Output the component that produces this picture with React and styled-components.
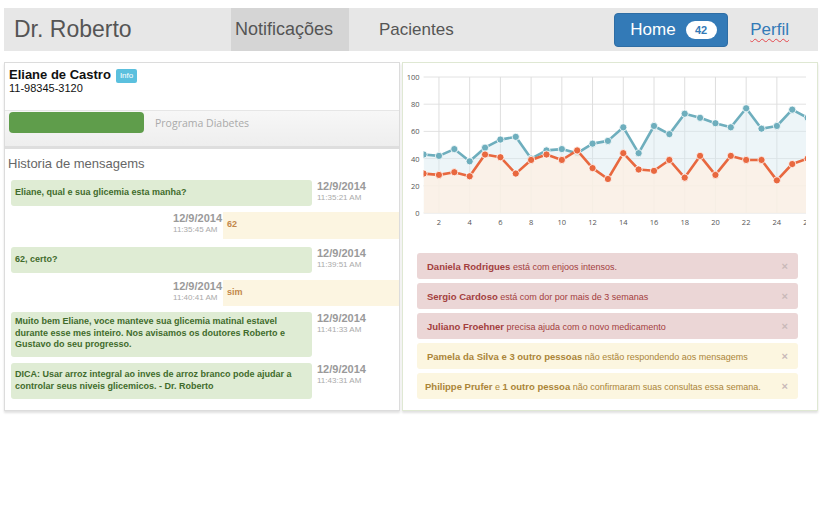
import React from 'react';
import styled, { createGlobalStyle } from 'styled-components';

const GlobalStyle = createGlobalStyle`
  body {
    margin: 0;
    background: #fff;
    font-family: "Liberation Sans", Arial, sans-serif;
  }
`;

const Page = styled.div`
  width: 822px;
  height: 516px;
  padding: 8px 4px 0;
  box-sizing: border-box;
`;

const Navbar = styled.div`
  height: 43px;
  background: #e7e7e7;
  display: flex;
  align-items: stretch;
  padding-left: 10px;
  padding-right: 29px;
`;

const Brand = styled.div`
  width: 217px;
  font-size: 23px;
  color: #555;
  display: flex;
  align-items: center;
`;

const NavItem = styled.div`
  width: ${p => p.w}px;
  padding-left: 4px;
  box-sizing: border-box;
  font-size: ${p => p.size || 17}px;
  color: #555;
  display: flex;
  align-items: center;
  background: ${p => p.active ? '#d5d5d5' : 'transparent'};
  margin-right: ${p => p.gap || 0}px;
`;

const HomeButton = styled.div`
  margin-left: auto;
  align-self: center;
  width: 114px;
  height: 34px;
  box-sizing: border-box;
  background: #337ab7;
  border: 1px solid #2e6da4;
  border-radius: 4px;
  color: #fff;
  font-size: 17px;
  display: flex;
  align-items: center;
  padding-left: 15px;
`;

const Badge = styled.span`
  margin-left: 10px;
  background: #fff;
  color: #337ab7;
  font-size: 11px;
  font-weight: bold;
  width: 31px;
  height: 18px;
  border-radius: 9px;
  display: flex;
  align-items: center;
  justify-content: center;
`;

const NavLink = styled.div`
  align-self: center;
  margin-left: 22px;
  font-size: 17px;
  color: #337ab7;
  text-decoration: underline wavy #e5484d;
  text-decoration-thickness: 1px;
  text-underline-offset: 3px;
`;

const Main = styled.div`
  display: flex;
  gap: 2px;
  margin-top: 11px;
  height: 349px;
`;

const Panel = styled.div`
  width: ${p => p.w}px;
  box-sizing: border-box;
  border: 1px solid ${p => p.border};
  box-shadow: 0 2px 2px rgba(0, 0, 0, 0.12);
  display: flex;
  flex-direction: column;
  overflow: hidden;
`;

const PatientHeader = styled.div`
  height: 48px;
  padding: 4px 4px 0;
  border-bottom: 1px solid #e6e6e6;
  box-sizing: border-box;
`;

const PatientName = styled.div`
  font-size: 13px;
  font-weight: bold;
  color: #111;
  display: flex;
  align-items: center;
  height: 14px;
`;

const InfoLabel = styled.span`
  margin-left: 5px;
  margin-top: 4px;
  background: #5bc0de;
  color: #fff;
  font-size: 8px;
  font-weight: normal;
  padding: 2px 4px 3px;
  border-radius: 2px;
`;

const Phone = styled.div`
  font-size: 11px;
  color: #111;
  margin-top: 1px;
`;

const ProgramRow = styled.div`
  height: 35px;
  background: linear-gradient(#f7f7f7, #eeeeee);
  display: flex;
  align-items: flex-start;
  padding: 0 4px;
  border-bottom: 3px solid #dedede;
`;

const ProgressFill = styled.div`
  width: 135px;
  height: 21px;
  margin-top: 1px;
  background: #5f9d4b;
  border-radius: 4px;
`;

const ProgramText = styled.div`
  margin-left: 11px;
  margin-top: 5px;
  font-family: "Open Sans", sans-serif;
  font-size: 10.5px;
  color: #aaa;
`;

const HistoryTitle = styled.div`
  font-size: 13px;
  color: #666;
  padding: 7px 0 0 3px;
  height: 27px;
  box-sizing: border-box;
`;

const MessageList = styled.div`
  display: flex;
  flex-direction: column;
  gap: 6px;
  padding-top: 4px;
`;

const MsgRow = styled.div`
  display: flex;
  justify-content: ${p => p.mine ? 'flex-start' : 'flex-end'};
  padding-left: ${p => p.mine ? 6 : 0}px;
  margin-bottom: ${p => p.extra || 0}px;
`;

const Bubble = styled.div`
  width: ${p => p.w}px;
  min-height: ${p => p.h}px;
  box-sizing: border-box;
  background: ${p => p.mine ? '#dfecd4' : '#fcf5e1'};
  color: ${p => p.mine ? '#3f6b2c' : '#c2874a'};
  border-radius: ${p => p.mine ? '3px' : '0'};
  font-size: 9px;
  font-weight: bold;
  line-height: 11.5px;
  padding: ${p => p.pad || '7px 4px 0'};
`;

const Stamp = styled.div`
  padding: 0 ${p => p.mine ? 0 : 1}px 0 ${p => p.mine ? 5 : 0}px;
  text-align: left;
`;

const StampDate = styled.div`
  font-size: 11px;
  font-weight: bold;
  color: #9a9a9a;
  line-height: 13px;
`;

const StampTime = styled.div`
  font-size: 8px;
  color: #aaa;
  line-height: 10px;
`;

const ChartBox = styled.div`
  height: 180px;
`;

const Alerts = styled.div`
  display: flex;
  flex-direction: column;
  gap: 4px;
  padding: 10px 19px 0 14px;
`;

const Alert = styled.div`
  height: 26px;
  border-radius: 3px;
  background: ${p => p.kind === 'danger' ? '#ebd6d6' : '#fcf6e0'};
  color: ${p => p.kind === 'danger' ? '#a3403e' : '#ab8538'};
  font-size: 9px;
  display: flex;
  align-items: center;
  padding: 0 10px 0 ${p => p.indent}px;
  b {
    font-size: 9.5px;
  }
`;

const Close = styled.span`
  margin-left: auto;
  color: #c9b9b9;
  font-size: 11px;
  font-weight: bold;
`;

const blue = [43, 42, 47, 38, 48, 54, 56, 40, 46, 47, 44, 51, 53, 63, 44, 64, 58, 73, 70, 66, 63, 77, 62, 64, 76, 70];
const orange = [29, 28, 30, 27, 43, 41, 29, 39, 43, 39, 46, 33, 25, 44, 32, 31, 39, 26, 42, 28, 42, 39, 39, 24, 36, 40];

const X0 = 20.6;
const DX = 15.36;
const Y0 = 150;
const DY = 1.36;
const RIGHT = 403;
const px = i => X0 + i * DX;
const py = v => Y0 - v * DY;

function Series({ data, color, fill }) {
  const pts = data.map((v, i) => `${px(i).toFixed(1)},${py(v).toFixed(1)}`);
  const area = `M${px(0)},${Y0} L${pts.join(' L')} L${px(data.length - 1)},${Y0} Z`;
  return (
    <g>
      <path d={area} fill={fill} />
      <polyline points={pts.join(' ')} fill="none" stroke={color} strokeWidth="2.6" strokeLinejoin="round" />
      {data.map((v, i) => (
        <circle key={i} cx={px(i)} cy={py(v)} r="3.6" fill={color} stroke="#fff" strokeWidth="0.8" />
      ))}
    </g>
  );
}

function Chart() {
  return (
    <svg width="414" height="180" style={{ display: 'block' }}>
      <defs>
        <clipPath id="plot">
          <rect x={X0} y="0" width={RIGHT - X0} height={Y0 + 1} />
        </clipPath>
        <clipPath id="axis">
          <rect x="0" y="0" width={RIGHT} height="180" />
        </clipPath>
      </defs>
      {[0, 20, 40, 60, 80, 100].map(v => (
        <g key={v}>
          <line x1={X0} x2={RIGHT} y1={py(v)} y2={py(v)} stroke="#e2e2e2" strokeWidth="1" />
          <text x={X0 - 4} y={py(v) + 3} fontSize="7.5" fill="#555" textAnchor="end" fontFamily="Open Sans, sans-serif">{v}</text>
        </g>
      ))}
      <g clipPath="url(#axis)">
        {[2, 4, 6, 8, 10, 12, 14, 16, 18, 20, 22, 24, 26].map(n => (
          <g key={n}>
            <line x1={px(n - 1)} x2={px(n - 1)} y1={py(100)} y2={Y0} stroke="#dedede" strokeWidth="1" />
            <text x={px(n - 1)} y={Y0 + 12} fontSize="7.5" fill="#555" textAnchor="middle" fontFamily="Open Sans, sans-serif">{n}</text>
          </g>
        ))}
      </g>
      <g clipPath="url(#plot)">
        <Series data={blue} color="#6eaebd" fill="rgba(214, 232, 240, 0.45)" />
        <Series data={orange} color="#e8683f" fill="rgba(252, 240, 228, 0.8)" />
      </g>
    </svg>
  );
}

const messages = [
  { mine: true, text: 'Eliane, qual e sua glicemia esta manha?', date: '12/9/2014', time: '11:35:21 AM', h: 26 },
  { mine: false, text: '62', date: '12/9/2014', time: '11:35:45 AM', h: 27, extra: 2 },
  { mine: true, text: '62, certo?', date: '12/9/2014', time: '11:39:51 AM', h: 26, extra: 1 },
  { mine: false, text: 'sim', date: '12/9/2014', time: '11:40:41 AM', h: 26 },
  { mine: true, text: 'Muito bem Eliane, voce manteve sua glicemia matinal estavel durante esse mes inteiro. Nos avisamos os doutores Roberto e Gustavo do seu progresso.', date: '12/9/2014', time: '11:41:33 AM', h: 45, pad: '4px 4px 0' },
  { mine: true, text: 'DICA: Usar arroz integral ao inves de arroz branco pode ajudar a controlar seus niveis glicemicos. - Dr. Roberto', date: '12/9/2014', time: '11:43:31 AM', h: 36, pad: '6px 4px 0' },
];

const alerts = [
  { kind: 'danger', name: 'Daniela Rodrigues', rest: ' está com enjoos intensos.', indent: 10 },
  { kind: 'danger', name: 'Sergio Cardoso', rest: ' está com dor por mais de 3 semanas', indent: 10 },
  { kind: 'danger', name: 'Juliano Froehner', rest: ' precisa ajuda com o novo medicamento', indent: 10 },
  { kind: 'warning', name: 'Pamela da Silva e 3 outro pessoas', rest: ' não estão respondendo aos mensagems', indent: 10 },
  { kind: 'warning', name: 'Philippe Prufer', rest: ' e ', name2: '1 outro pessoa', rest2: ' não confirmaram suas consultas essa semana.', indent: 8 },
];

export default function App() {
  return (
    <Page>
      <GlobalStyle />
      <Navbar>
        <Brand>Dr. Roberto</Brand>
        <NavItem active w={118} gap={26} size={18}>Notificações</NavItem>
        <NavItem w={90}>Pacientes</NavItem>
        <HomeButton>Home<Badge>42</Badge></HomeButton>
        <NavLink>Perfil</NavLink>
      </Navbar>
      <Main>
        <Panel w={396} border="#dcdcdc">
          <PatientHeader>
            <PatientName>Eliane de Castro<InfoLabel>Info</InfoLabel></PatientName>
            <Phone>11-98345-3120</Phone>
          </PatientHeader>
          <ProgramRow>
            <ProgressFill />
            <ProgramText>Programa Diabetes</ProgramText>
          </ProgramRow>
          <HistoryTitle>Historia de mensagems</HistoryTitle>
          <MessageList>
            {messages.map((m, i) => (
              <MsgRow key={i} mine={m.mine} extra={m.extra}>
                {!m.mine && (
                  <Stamp mine={false}>
                    <StampDate>{m.date}</StampDate>
                    <StampTime>{m.time}</StampTime>
                  </Stamp>
                )}
                <Bubble mine={m.mine} w={m.mine ? 301 : 176} h={m.h} pad={m.pad}>{m.text}</Bubble>
                {m.mine && (
                  <Stamp mine>
                    <StampDate>{m.date}</StampDate>
                    <StampTime>{m.time}</StampTime>
                  </Stamp>
                )}
              </MsgRow>
            ))}
          </MessageList>
        </Panel>
        <Panel w={416} border="#dfe8d3">
          <ChartBox>
            <Chart />
          </ChartBox>
          <Alerts>
            {alerts.map((a, i) => (
              <Alert key={i} kind={a.kind} indent={a.indent}>
                <span>
                  <b>{a.name}</b>{a.rest}
                  {a.name2 && <b>{a.name2}</b>}{a.rest2}
                </span>
                <Close>×</Close>
              </Alert>
            ))}
          </Alerts>
        </Panel>
      </Main>
    </Page>
  );
}
